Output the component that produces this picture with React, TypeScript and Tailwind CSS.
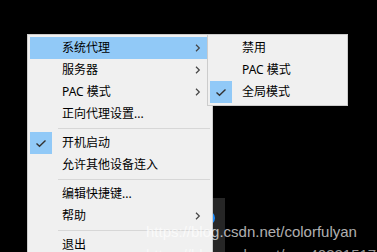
import React from 'react';

type Item =
  | { kind: 'sep' }
  | { kind: 'item'; label: string; arrow?: boolean; checked?: boolean; active?: boolean };

const mainItems: Item[] = [
  { kind: 'item', label: '系统代理', arrow: true, active: true },
  { kind: 'item', label: '服务器', arrow: true },
  { kind: 'item', label: 'PAC 模式', arrow: true },
  { kind: 'item', label: '正向代理设置...' },
  { kind: 'sep' },
  { kind: 'item', label: '开机启动', checked: true },
  { kind: 'item', label: '允许其他设备连入' },
  { kind: 'sep' },
  { kind: 'item', label: '编辑快捷键...' },
  { kind: 'item', label: '帮助', arrow: true },
  { kind: 'sep' },
  { kind: 'item', label: '退出' },
];

const subItems: Item[] = [
  { kind: 'item', label: '禁用' },
  { kind: 'item', label: 'PAC 模式' },
  { kind: 'item', label: '全局模式', checked: true },
];

const Check = () => (
  <svg width="22" height="22" viewBox="0 0 22 22">
    <path d="M6.5 11.5 L9.5 14.3 L15.5 8.5" fill="none" stroke="#333" strokeWidth="1.4" />
  </svg>
);

const Chevron = () => (
  <svg width="6" height="8" viewBox="0 0 6 8">
    <path d="M1 0.8 L4.3 4 L1 7.2" fill="none" stroke="#444" strokeWidth="1.2" />
  </svg>
);

const MenuRow: React.FC<{ item: Item }> = ({ item }) => {
  if (item.kind === 'sep') {
    return (
      <div className="h-[7px] flex items-center pl-[28px]">
        <div className="h-px w-full bg-[#d7d7d7]" />
      </div>
    );
  }
  return (
    <div className={`h-[22px] flex items-center ${item.active ? 'bg-[#91c9f7]' : ''}`}>
      <div className={`w-[22px] h-[22px] shrink-0 ${item.checked ? 'bg-[#91c9f7]' : ''}`}>
        {item.checked && <Check />}
      </div>
      <span className="ml-[10px] flex-1 text-[12px] text-black leading-none whitespace-nowrap">{item.label}</span>
      {item.arrow && (
        <span className="mr-[9px] flex items-center">
          <Chevron />
        </span>
      )}
    </div>
  );
};

const Menu: React.FC<{ items: Item[]; className: string }> = ({ items, className }) => (
  <div className={`absolute border border-[#cccccc] bg-[#f0f0f0] p-[2px] ${className}`}>
    {items.map((it, i) => (
      <MenuRow key={i} item={it} />
    ))}
  </div>
);

export default function App() {
  return (
    <div
      className="relative w-[377px] h-[252px] bg-black overflow-hidden"
      style={{ fontFamily: '"Noto Sans", "Noto Sans CJK SC", sans-serif' }}
    >
      {/* taskbar bits behind the menu */}
      <div className="absolute left-[213px] top-[198px] w-[12px] h-[60px] bg-[#262626]" />
      <div className="absolute left-[201px] top-[211px] w-[14px] h-[14px] rounded-full bg-[#1a8cff]" />

      <Menu items={mainItems} className="left-[27px] top-[34px] w-[186px]" />
      <Menu items={subItems} className="left-[207px] top-[34px] w-[141px]" />

      {/* watermark */}
      <div
        className="absolute left-[146px] top-[223px] flex flex-col gap-[5px] text-[15px] leading-[18px] whitespace-nowrap"
        style={{ fontFamily: '"Liberation Sans", Arial, sans-serif' }}
      >
        <span className="text-white/70">https://blog.csdn.net/colorfulyan</span>
        <span className="text-white/60">https://blog.csdn.net/qq_40321517</span>
      </div>
    </div>
  );
}
